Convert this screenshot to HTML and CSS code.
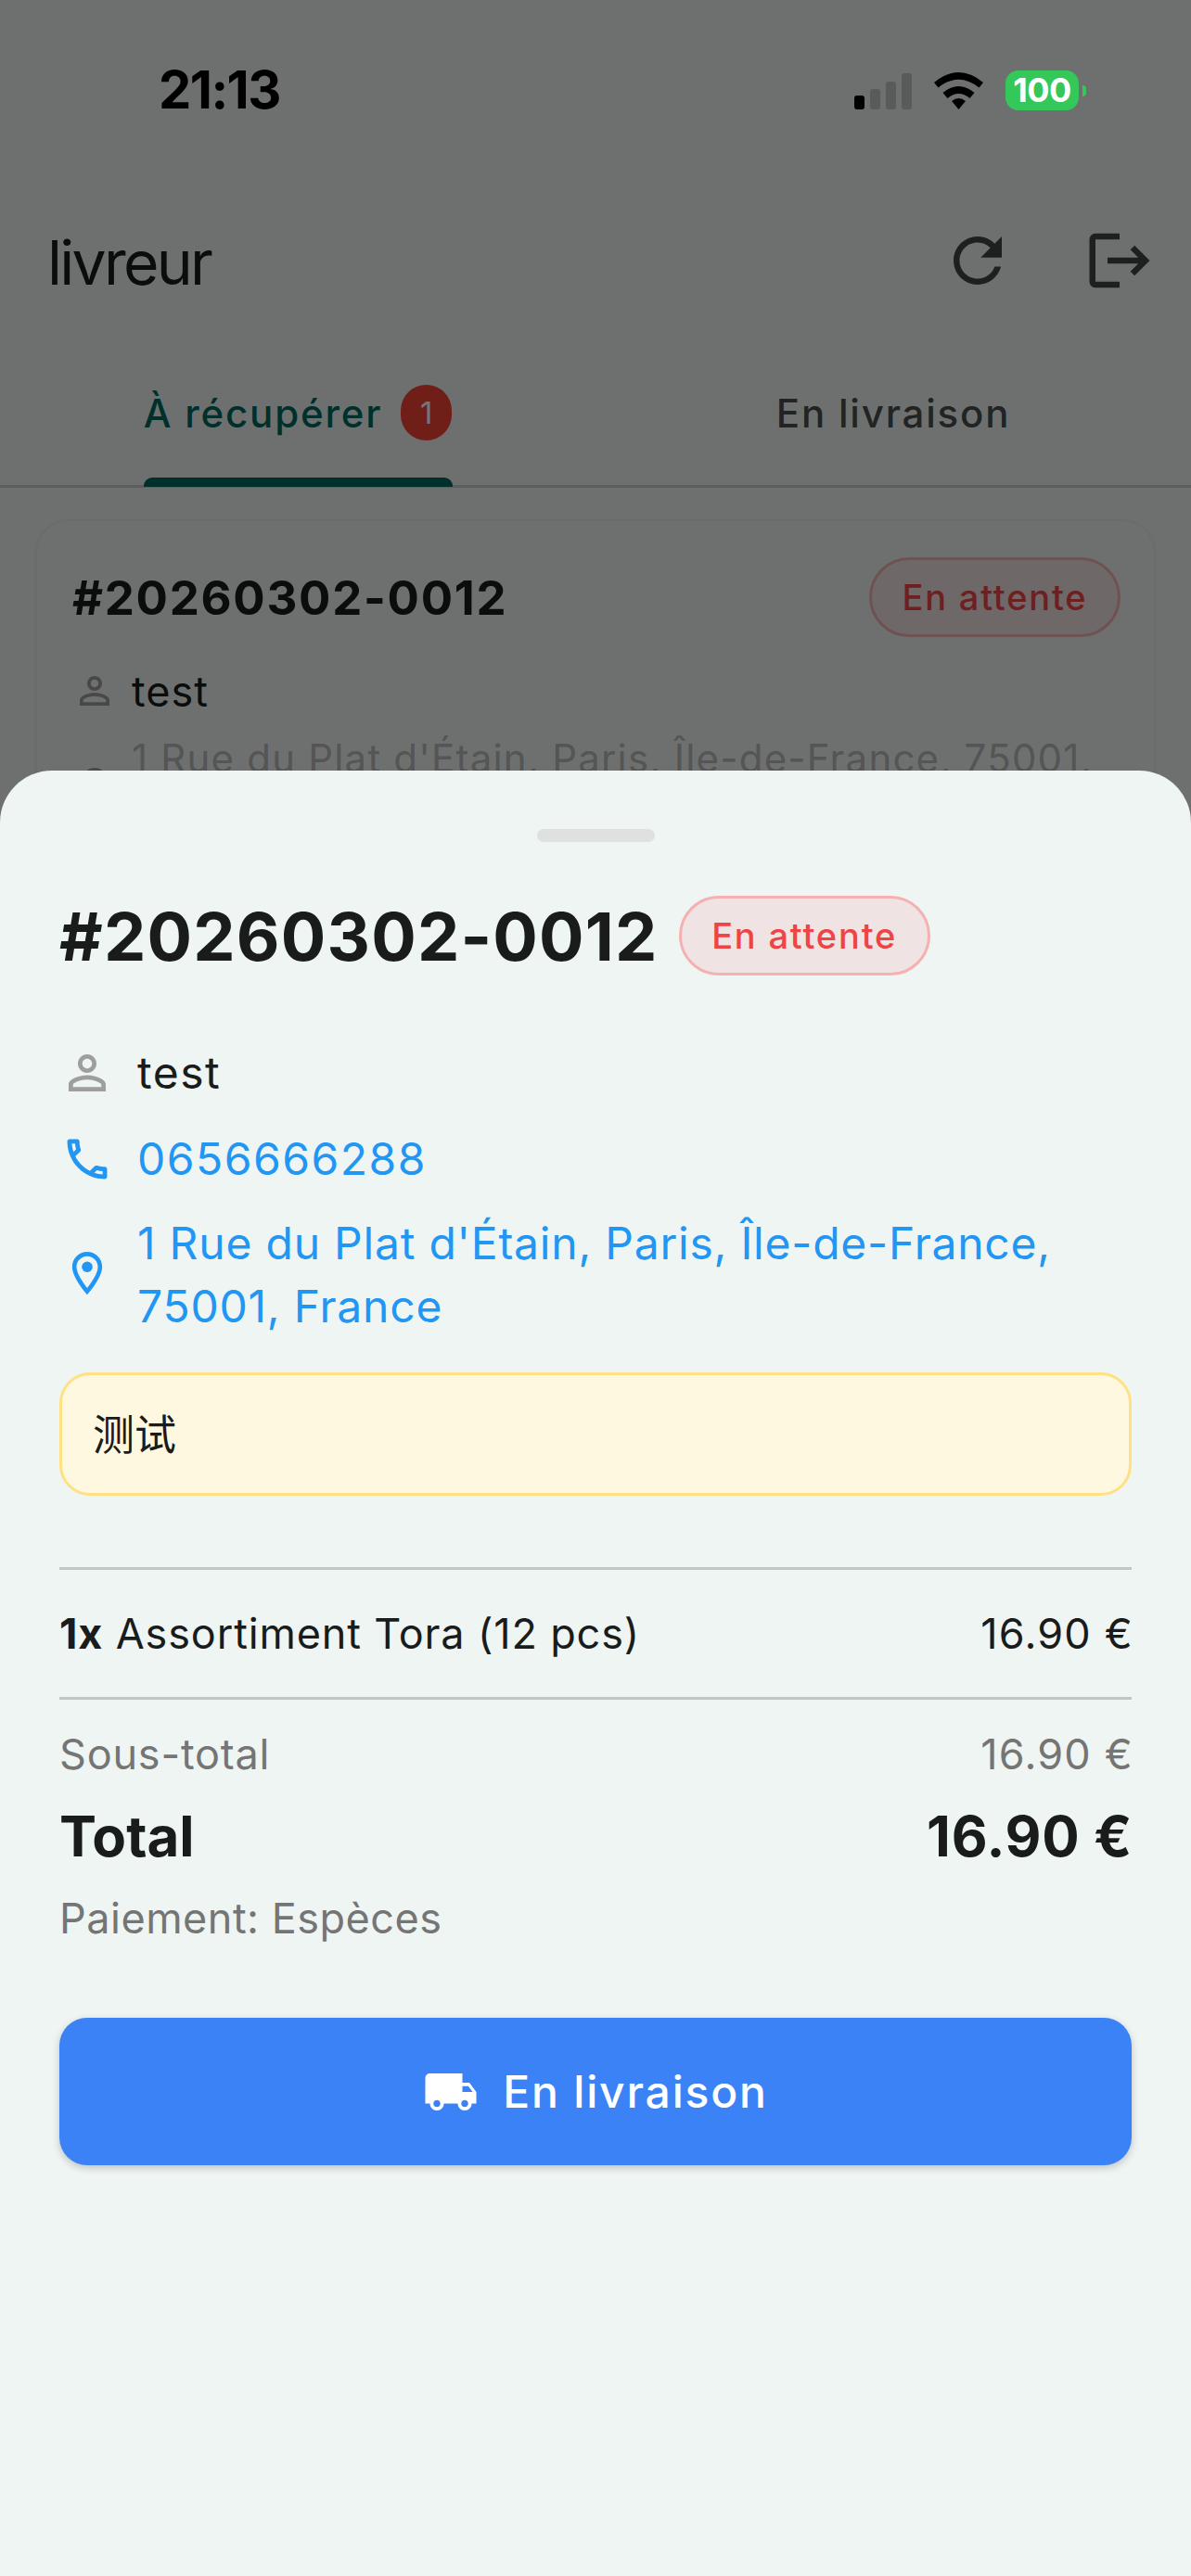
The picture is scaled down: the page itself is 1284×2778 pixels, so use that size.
FILE: index.html
```html
<!DOCTYPE html>
<html lang="fr">
<head>
<meta charset="utf-8">
<title>livreur</title>
<link rel="stylesheet" href="styles.css">
</head>
<body>
<div class="stage">
  <div class="statusbar">
    <span class="clock">21:13</span>
    <div class="status-right">
      <div class="signal"><i class="bar b1"></i><i class="bar b2"></i><i class="bar b3"></i><i class="bar b4"></i></div>
      <svg class="wifi" viewBox="0 0 53 40"><path d="M0 11Q26.500-11 53 11L48.500 16.500Q26.500-1 4.500 16.500Z"/><path d="M9.500 22Q26.500 8 43.500 22L38.500 28Q26.500 18 14.500 28Z"/><path d="M19 31Q26.500 25 34 31L26.500 40Z"/></svg>
      <div class="battery"><span class="battery-body">100</span><i class="battery-nub"></i></div>
    </div>
  </div>

  <header class="appbar">
    <h1 class="app-title">livreur</h1>
    <div class="app-actions">
      <svg class="app-icon" viewBox="0 0 24 24"><path d="M17.65 6.35C16.2 4.9 14.21 4 12 4c-4.420 0-7.990 3.580-7.990 8s3.570 8 7.990 8c3.730 0 6.840-2.550 7.730-6h-2.080c-.82 2.330-3.040 4-5.650 4-3.310 0-6-2.690-6-6s2.690-6 6-6c1.660 0 3.140.69 4.220 1.780L13 11h7V4l-2.350 2.350z"/></svg>
      <svg class="app-icon" viewBox="0 0 24 24"><path d="M17 7l-1.410 1.410L18.170 11H8v2h10.170l-2.580 2.580L17 17l5-5zM4 5h8V3H4c-1.100 0-2 .9-2 2v14c0 1.100.9 2 2 2h8v-2H4V5z"/></svg>
    </div>
  </header>

  <nav class="tabs">
    <div class="tab tab-active">
      <div class="tab-label"><span>À récupérer</span><span class="count">1</span></div>
      <i class="tab-indicator"></i>
    </div>
    <div class="tab"><div class="tab-label"><span>En livraison</span></div></div>
  </nav>

  <main class="list">
    <article class="card">
      <div class="card-head">
        <span class="card-order">#20260302-0012</span>
        <span class="pill">En attente</span>
      </div>
      <div class="card-row">
        <svg class="card-icon" viewBox="0 0 24 24"><path d="M12 5.900c1.160 0 2.100.94 2.100 2.100s-.94 2.100-2.100 2.100S9.900 9.160 9.900 8s.94-2.100 2.100-2.100m0 9c2.970 0 6.100 1.460 6.100 2.100v1.100H5.900V17c0-.64 3.130-2.100 6.100-2.100M12 4C9.790 4 8 5.790 8 8s1.790 4 4 4 4-1.790 4-4-1.790-4-4-4zm0 9c-2.670 0-8 1.340-8 4v3h16v-3c0-2.660-5.330-4-8-4z"/></svg>
        <span class="card-name">test</span>
      </div>
      <div class="card-row card-row-addr">
        <svg class="card-icon" viewBox="0 0 24 24"><path d="M12 2C8.130 2 5 5.130 5 9c0 5.250 7 13 7 13s7-7.750 7-13c0-3.870-3.130-7-7-7zM7 9c0-2.760 2.240-5 5-5s5 2.240 5 5c0 2.880-2.880 7.190-5 9.880C9.920 16.210 7 11.850 7 9z"/></svg>
        <span class="card-addr">1 Rue du Plat d'Étain, Paris, Île-de-France, 75001, France</span>
      </div>
    </article>
  </main>

  <div class="scrim"></div>

  <section class="sheet">
    <div class="handle"></div>
    <div class="sheet-head">
      <h2 class="sheet-order">#20260302-0012</h2>
      <span class="pill">En attente</span>
    </div>
    <div class="info-row">
      <svg class="info-icon icon-grey" viewBox="0 0 24 24"><path d="M12 5.900c1.160 0 2.100.94 2.100 2.100s-.94 2.100-2.100 2.100S9.900 9.160 9.900 8s.94-2.100 2.100-2.100m0 9c2.970 0 6.100 1.460 6.100 2.100v1.100H5.900V17c0-.64 3.130-2.100 6.100-2.100M12 4C9.790 4 8 5.790 8 8s1.790 4 4 4 4-1.790 4-4-1.790-4-4-4zm0 9c-2.670 0-8 1.340-8 4v3h16v-3c0-2.660-5.330-4-8-4z"/></svg>
      <span class="info-text">test</span>
    </div>
    <div class="info-row">
      <svg class="info-icon icon-blue" viewBox="-0.6 -0.6 25.2 25.2"><path d="M6.540 5c.06.89.21 1.760.45 2.590l-1.200 1.200c-.41-1.200-.67-2.470-.76-3.790h1.510m9.860 12.020c.85.24 1.720.39 2.600.45v1.490c-1.320-.09-2.590-.35-3.800-.75l1.200-1.190M7.500 3H4c-.55 0-1 .45-1 1 0 9.390 7.610 17 17 17 .55 0 1-.45 1-1v-3.490c0-.55-.45-1-1-1-1.240 0-2.450-.2-3.570-.57-.1-.04-.21-.05-.31-.05-.26 0-.51.1-.71.29l-2.200 2.200c-2.830-1.450-5.150-3.760-6.590-6.590l2.200-2.200c.28-.28.36-.67.25-1.020C8.700 6.450 8.500 5.250 8.500 4c0-.55-.45-1-1-1z"/></svg>
      <span class="info-text link">0656666288</span>
    </div>
    <div class="info-row info-row-addr">
      <svg class="info-icon icon-blue" viewBox="-1 -0.2 26 26"><path d="M12 2C8.130 2 5 5.130 5 9c0 5.250 7 13 7 13s7-7.750 7-13c0-3.870-3.130-7-7-7zM7 9c0-2.760 2.240-5 5-5s5 2.240 5 5c0 2.880-2.880 7.190-5 9.880C9.920 16.210 7 11.850 7 9z"/><circle cx="12" cy="9" r="2.500"/></svg>
      <span class="info-text link addr">1 Rue du Plat d'Étain, Paris, Île-de-France, 75001, France</span>
    </div>
    <div class="note">测试</div>
    <div class="line-item">
      <span><b>1x</b> Assortiment Tora (12 pcs)</span>
      <span class="amount">16.90 €</span>
    </div>
    <div class="sum-row muted"><span>Sous-total</span><span class="amount">16.90 €</span></div>
    <div class="sum-row total"><span>Total</span><span class="total-amount">16.90 €</span></div>
    <div class="payment muted">Paiement: Espèces</div>
    <button class="action">
      <svg class="action-icon" viewBox="0 0 24 24"><path d="M20 8h-3V4H3c-1.100 0-2 .9-2 2v11h2c0 1.660 1.340 3 3 3s3-1.340 3-3h6c0 1.660 1.340 3 3 3s3-1.340 3-3h2v-5l-3-4zM6 18.500c-.83 0-1.500-.67-1.500-1.500s.67-1.500 1.500-1.500 1.500.67 1.500 1.500-.67 1.500-1.500 1.500zm13.500-9l1.960 2.500H17V9.500h2.500zm-1.500 9c-.83 0-1.500-.67-1.500-1.500s.67-1.500 1.500-1.500 1.500.67 1.500 1.500-.67 1.500-1.500 1.500z"/></svg>
      <span>En livraison</span>
    </button>
  </section>
</div>
</body>
</html>
```

FILE: styles.css
```css
* { box-sizing: border-box; }
html, body { margin: 0; padding: 0; }
body { font-family: Inter, "Noto Sans CJK SC", sans-serif; color: #191c1b; background: #eff5f3; }

.stage { position: relative; width: 1284px; height: 2778px; overflow: hidden; background: #eff5f3; }

/* Status bar sits above the scrim */
.statusbar { position: relative; z-index: 3; height: 194px; padding: 70px 113px 0 171px; display: flex; justify-content: space-between; align-items: flex-start; }
.clock { font-size: 56px; line-height: 54px; font-weight: 700; color: #000; letter-spacing: -1.500px; }
.status-right { display: flex; align-items: flex-start; padding-top: 6px; }
.signal { display: flex; align-items: flex-end; gap: 6px; height: 40px; margin-top: 2px; margin-right: 24px; }
.bar { display: block; width: 11px; border-radius: 3px; background: #595a5a; }
.b1 { height: 15px; background: #000; }
.b2 { height: 22px; }
.b3 { height: 30px; }
.b4 { height: 39px; }
.wifi { width: 53px; height: 40px; margin-top: 2px; margin-right: 24px; fill: #000; }
.battery { display: flex; align-items: center; gap: 4px; }
.battery-body { width: 79px; height: 43px; border-radius: 14px; background: #34c759; color: #fff; font-size: 36px; line-height: 43px; font-weight: 700; text-align: center; letter-spacing: -.5px; }
.battery-nub { display: block; width: 4px; height: 12px; border-radius: 0 4px 4px 0; background: #34c759; }

/* App bar */
.appbar { height: 174px; padding: 0 38px 0 51px; display: flex; align-items: center; justify-content: space-between; }
.app-title { margin: 4px 0 0; font-size: 66px; line-height: 84px; font-weight: 400; letter-spacing: -2.700px; color: #191c1b; }
.app-actions { display: flex; gap: 75px; }
.app-icon { width: 78px; height: 78px; fill: #434746; }

/* Tabs */
.tabs { height: 158px; display: flex; border-bottom: 3px solid #c8cbc9; }
.tab { flex: 1; display: flex; flex-direction: column; align-items: center; position: relative; }
.tab-label { display: flex; align-items: center; gap: 20px; height: 154px; font-size: 42px; font-weight: 500; letter-spacing: 1.800px; color: #49504e; }
.tab-active .tab-label { color: #006a60; }
.count { display: flex; align-items: center; justify-content: center; width: 55px; height: 60px; border-radius: 30px; background: #f44336; color: #fff; font-size: 33px; font-weight: 400; letter-spacing: 0; }
.tab-indicator { position: absolute; bottom: -2px; display: block; width: 333px; height: 10px; border-radius: 9px 9px 0 0; background: #006a60; }

/* Card behind the sheet */
.list { padding: 34px 38px 0; }
.card { height: 400px; border: 2px solid #e6ebe9; border-radius: 36px; padding: 39px 36px 0 38px; background: #eff5f3; box-shadow: 0 1px 3px rgba(0,0,0,.04); }
.card-head { display: flex; justify-content: space-between; align-items: center; height: 86px; }
.card-order { font-size: 51px; font-weight: 700; letter-spacing: 1.700px; color: #191c1b; }
.pill { display: flex; align-items: center; justify-content: center; width: 271px; height: 86px; border: 3px solid #f5b1b1; border-radius: 43px; background: #efe3e3; color: #ef4444; font-size: 38px; font-weight: 500; letter-spacing: 1.800px; }
.card-row { display: flex; align-items: center; gap: 16px; margin-top: 24px; min-height: 68px; }
.card-row-addr { margin-top: 9px; }
.card-icon { width: 48px; height: 48px; fill: #9e9e9e; flex: none; }
.card-name { font-size: 45px; letter-spacing: 1px; color: #191c1b; }
.card-addr { font-size: 42px; line-height: 60px; letter-spacing: 1.200px; color: #b8b9b8; }

/* Scrim */
.scrim { position: absolute; inset: 0; z-index: 1; background: rgba(0,0,0,.54); }

/* Bottom sheet */
.sheet { position: absolute; z-index: 2; left: 0; right: 0; top: 831px; bottom: 0; padding: 63px 64px 0; background: #eff5f3; border-radius: 56px 56px 0 0; }
.handle { width: 127px; height: 14px; margin: 0 auto 58px; border-radius: 7px; background: #dfe1e0; }
.sheet-head { display: flex; align-items: center; gap: 22px; height: 86px; margin-bottom: 71px; }
.sheet-order { margin: 0; font-size: 72px; font-weight: 700; letter-spacing: 1.200px; color: #191c1b; }
.info-row { display: flex; align-items: center; gap: 24px; margin-bottom: 25px; min-height: 68px; }
.info-row-addr { margin-top: -2px; margin-bottom: 0; }
.info-icon { width: 60px; height: 60px; flex: none; }
.icon-grey { fill: #9e9e9e; }
.icon-blue { fill: #2196f3; }
.info-text { font-size: 48px; line-height: 68px; letter-spacing: 1.500px; color: #191c1b; }
.link { color: #2196f3; }
.addr { letter-spacing: .78px; }
.note { height: 133px; margin-top: 37px; padding: 0 33px 5px; display: flex; align-items: center; border: 3px solid #ffe082; border-radius: 33px; background: #fff8e1; font-size: 45px; color: #191c1b; }
.line-item { display: flex; justify-content: space-between; align-items: center; height: 143px; margin-top: 77px; border-top: 3px solid #c0c7c4; border-bottom: 3px solid #c0c7c4; font-size: 45px; letter-spacing: .85px; color: #191c1b; }
.line-item b { font-weight: 700; }
.sum-row { display: flex; justify-content: space-between; align-items: center; }
.amount { letter-spacing: 1.200px; margin-right: -2px; }
.muted { color: #757575; font-size: 45px; letter-spacing: .8px; line-height: 60px; }
.sum-row.muted { margin-top: 29px; }
.total { margin-top: 21px; font-size: 60px; line-height: 74px; font-weight: 700; color: #191c1b; }
.total-amount { letter-spacing: .7px; margin-right: -1px; }
.payment { margin-top: 22px; letter-spacing: .5px; }
.action { display: flex; align-items: center; justify-content: center; gap: 26px; width: 100%; height: 159px; margin-top: 77px; padding: 0; border: 0; border-radius: 30px; background: #3b82f6; color: #fff; font-family: inherit; font-size: 48px; font-weight: 500; letter-spacing: 1.800px; box-shadow: 0 3px 9px rgba(0,0,0,.2); }
.action-icon { width: 60px; height: 60px; fill: #fff; flex: none; }
```
